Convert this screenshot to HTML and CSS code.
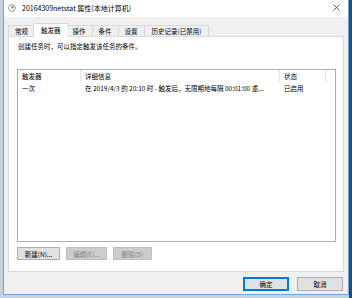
FILE: index.html
```html
<!DOCTYPE html>
<html lang="zh-CN">
<head>
    <meta charset="UTF-8">
    <title>20164309netstat 属性(本地计算机)</title>
    <link rel="stylesheet" href="styles.css">
</head>
<body>
    <div class="window">
        <!-- Title bar -->
        <div class="titlebar">
            <svg class="app-icon" width="8" height="8" viewBox="0 0 8 8">
                <circle cx="4" cy="4" r="3.4" fill="#fdfdfd" stroke="#7d8896" stroke-width="0.8"/>
                <path d="M4 4 L4 1 A3 3 0 0 1 7 4 Z" fill="#e8c45a"/>
                <path d="M4 2 L4 4 L5.6 4" fill="none" stroke="#4a5563" stroke-width="0.7"/>
            </svg>
            <span class="title">20164309netstat 属性(本地计算机)</span>
            <svg class="close" width="7" height="7" viewBox="0 0 7 7">
                <path d="M0.5 0.5 L6.5 6.5 M6.5 0.5 L0.5 6.5" stroke="#333" stroke-width="0.8"/>
            </svg>
        </div>

        <!-- Tabs -->
        <div class="tabs">
            <div class="tab">常规</div>
            <div class="tab active">触发器</div>
            <div class="tab">操作</div>
            <div class="tab">条件</div>
            <div class="tab">设置</div>
            <div class="tab tab-wide">历史记录(已禁用)</div>
        </div>

        <!-- Tab panel -->
        <div class="panel">
            <p class="desc">创建任务时，可以指定触发该任务的条件。</p>
            <div class="list">
                <div class="list-row list-head">
                    <span>触发器</span>
                    <span>详细信息</span>
                    <span>状态</span>
                </div>
                <div class="list-row">
                    <span>一次</span>
                    <span>在 2019/4/3 的 20:10 时 - 触发后，无限期地每隔 00:01:00 重...</span>
                    <span>已启用</span>
                </div>
            </div>
            <div class="actions">
                <button class="btn btn-new">新建(N)...</button>
                <button class="btn btn-edit" disabled>编辑(E)...</button>
                <button class="btn btn-del" disabled>删除(D)</button>
            </div>
        </div>

        <!-- Dialog buttons -->
        <div class="footer">
            <button class="btn btn-ok">确定</button>
            <button class="btn btn-cancel">取消</button>
        </div>
    </div>
    <div class="desktop"></div>
</body>
</html>
```

FILE: styles.css
```css
/* General */
* {
    box-sizing: border-box;
}

body {
    margin: 0;
    width: 352px;
    height: 298px;
    display: flex;
    background-color: #c6d2df;
    font-family: "Noto Sans CJK SC", "Noto Sans", sans-serif;
    font-size: 6.5px;
    color: #000;
    overflow: hidden;
}

.desktop {
    width: 3px;
    height: 298px;
    background-color: #1f4e82;
}

/* Window frame */
.window {
    margin-left: 3px;
    width: 346px;
    height: 295px;
    border: 1px solid #6ea6e0;
    border-top: none;
    background-color: #f0f0f0;
    display: flex;
    flex-direction: column;
}

.titlebar {
    height: 17px;
    background-color: #fff;
    display: flex;
    align-items: center;
    padding: 0 4px 2px 4px;
}

.app-icon {
    margin-right: 6px;
}

.title {
    font-size: 7px;
    flex: 1;
}

.close {
    margin-right: 4px;
}

/* Tabs */
.tabs {
    display: flex;
    margin: 6px 4px 0 4px;
    height: 13px;
    position: relative;
    z-index: 1;
}

.tab {
    height: 11px;
    margin-top: 2px;
    padding: 0 6px;
    line-height: 10px;
    border: 1px solid #d9d9d9;
    border-left: none;
    border-bottom: none;
    background-color: #f0f0f0;
}

.tab:first-child {
    border-left: 1px solid #d9d9d9;
}

.tab.active {
    height: 14px;
    margin: 0 -2px;
    padding: 0 7px;
    line-height: 13px;
    background-color: #fff;
    border-left: 1px solid #d9d9d9;
}

.tab-wide {
    padding: 0 7px;
}

/* Panel */
.panel {
    margin: 0 4px;
    height: 236px;
    background-color: #fff;
    border: 1px solid #d9d9d9;
    padding: 0 0 0 8px;
}

.desc {
    margin: 5px 0 0 1px;
    line-height: 9px;
}

.list {
    margin-top: 18px;
    width: 319px;
    height: 173px;
    border: 1px solid #adadad;
}

.list-row {
    display: grid;
    grid-template-columns: 63px 199px 46px;
    height: 12px;
    line-height: 12px;
}

.list-row span {
    padding-left: 4px;
    white-space: nowrap;
    overflow: hidden;
}

.list-head span {
    border-right: 1px solid #e5e5e5;
}

/* Buttons */
.actions {
    display: flex;
    gap: 6px;
    margin-top: 5px;
}

.btn {
    height: 13px;
    padding: 0;
    font-family: inherit;
    font-size: 6.5px;
    color: #000;
    background-color: #e1e1e1;
    border: 1px solid #adadad;
}

.btn:disabled {
    color: #838383;
    background-color: #cccccc;
    border-color: #bfbfbf;
}

.btn-new {
    width: 43px;
}

.btn-edit {
    width: 41px;
}

.btn-del {
    width: 39px;
}

.footer {
    display: flex;
    justify-content: flex-end;
    gap: 8px;
    padding: 5px 5px 0 0;
}

.btn-ok,
.btn-cancel {
    width: 46px;
    height: 14px;
}

.btn-ok {
    border: 1px solid #0078d7;
    box-shadow: inset 0 0 0 1px #0078d7;
}
```
